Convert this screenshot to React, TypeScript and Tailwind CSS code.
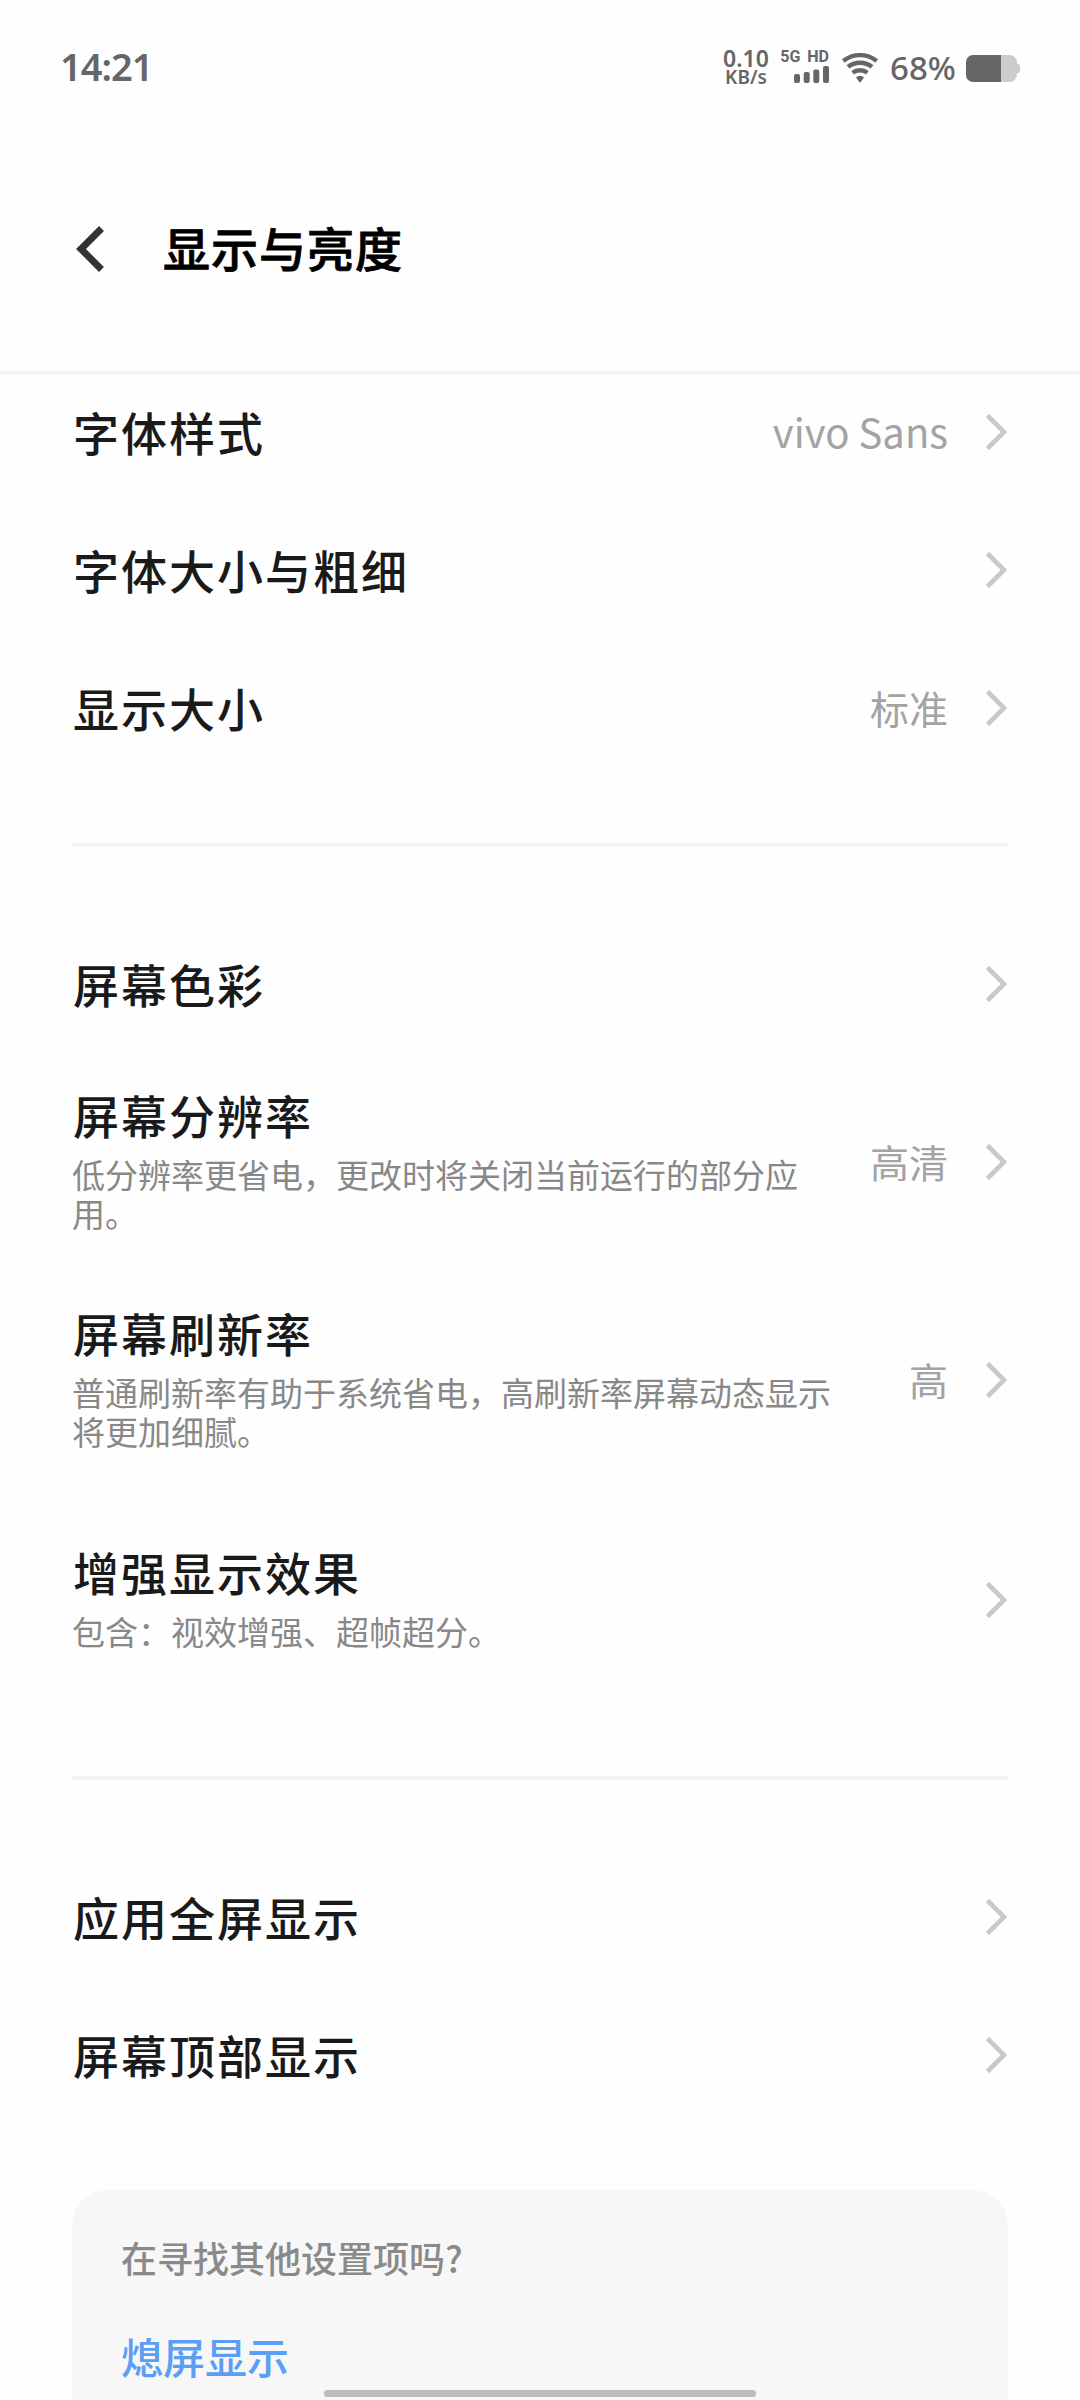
import { clsx } from 'clsx'

interface SettingItem {
  title: string
  description?: string
  value?: string
  className?: string
}

const fontGroup: SettingItem[] = [
  { title: '字体样式', value: 'vivo Sans', className: 'h-[126px] pb-3' },
  { title: '字体大小与粗细' },
  { title: '显示大小', value: '标准' }
]

const screenGroup: SettingItem[] = [
  { title: '屏幕色彩' },
  {
    title: '屏幕分辨率',
    description: '低分辨率更省电，更改时将关闭当前运行的部分应用。',
    value: '高清',
    className: 'h-[218px]'
  },
  {
    title: '屏幕刷新率',
    description: '普通刷新率有助于系统省电，高刷新率屏幕动态显示将更加细腻。',
    value: '高',
    className: 'h-[218px]'
  },
  { title: '增强显示效果', description: '包含：视效增强、超帧超分。', className: 'h-[221px]' }
]

const displayGroup: SettingItem[] = [{ title: '应用全屏显示' }, { title: '屏幕顶部显示' }]

function ChevronIcon() {
  return (
    <svg width="22" height="38" viewBox="0 0 22 38" fill="none" className="shrink-0">
      <path d="M2.5 2.5 19 19 2.5 35.5" stroke="#c9c9c9" strokeWidth="4.6" />
    </svg>
  )
}

function BackIcon() {
  return (
    <svg width="30" height="48" viewBox="0 0 30 48" fill="none" className="shrink-0">
      <path d="M27.5 3.5 7 24l20.5 20.5" stroke="#333" strokeWidth="7" />
    </svg>
  )
}

function SignalIcon() {
  return (
    <svg width="36" height="17" viewBox="0 0 36 17" fill="#666">
      <rect x="0" y="8" width="6" height="9" rx="2" />
      <rect x="9.7" y="6" width="6" height="11" rx="2" />
      <rect x="19.3" y="3.5" width="6" height="13.5" rx="2" />
      <rect x="29" y="0" width="6" height="17" rx="2" />
    </svg>
  )
}

function WifiIcon() {
  return (
    <svg width="36" height="30" viewBox="0 0 36 30" fill="none" stroke="#666" strokeWidth="4.4">
      <path d="M1.3 8a26.8 26.8 0 0 1 33.4 0" />
      <path d="M6 13.9a19.3 19.3 0 0 1 24 0" />
      <path d="M10.6 19.8a11.8 11.8 0 0 1 14.8 0" />
      <path d="M14 24.3a6.5 6.5 0 0 1 8 0l-3 4.5a1.2 1.2 0 0 1-2 0z" fill="#666" stroke="none" />
    </svg>
  )
}

function BatteryIcon() {
  return (
    <svg width="54" height="28" viewBox="0 0 54 28">
      <path d="M34 0h9.5a7.5 7.5 0 0 1 7.5 7.5V9h.5a2.5 2.5 0 0 1 2.5 2.5v4a2.5 2.5 0 0 1-2.5 2.5H51v1.5a7.5 7.5 0 0 1-7.5 7.5H34z" fill="#ccc" />
      <path d="M7 0h28v27H7a7 7 0 0 1-7-7V7a7 7 0 0 1 7-7z" fill="#666" />
    </svg>
  )
}

function StatusBar() {
  return (
    <div className="flex h-[134px] shrink-0 items-center justify-between pr-[60px] pl-[60px] text-[#666]">
      <span className="pb-0.5 font-['Noto_Sans',sans-serif] text-[38px] leading-none font-semibold tracking-[-1px]">14:21</span>
      <div className="flex items-center">
        <div className="flex w-[46px] flex-col items-center font-['Noto_Sans',sans-serif] leading-none font-semibold">
          <span className="text-[23px] leading-[20px]">0.10</span>
          <span className="text-[19px] leading-[19px]">KB/s</span>
        </div>
        <div className="ml-[14px] flex w-[47px] flex-col items-end pb-0.5">
          <div className="flex gap-[7px] pr-px font-['Roboto',sans-serif] text-[16px] leading-[15px] font-bold">
            <span>5G</span>
            <span>HD</span>
          </div>
          <div className="mt-[2px]">
            <SignalIcon />
          </div>
        </div>
        <div className="ml-3 pt-0.5">
          <WifiIcon />
        </div>
        <span className="ml-[12px] w-[76px] font-['Noto_Sans',sans-serif] text-[33px] leading-none font-medium">68%</span>
        <div className="pt-[3px]">
          <BatteryIcon />
        </div>
      </div>
    </div>
  )
}

function SettingRow({ title, description, value, className }: SettingItem) {
  return (
    <div className={clsx('flex items-center', className ?? 'h-[138px]')}>
      <div className={clsx('min-w-0 flex-1', description ? 'pb-[7px]' : 'pb-[3px]')}>
        <h2 className="pl-px text-[46px] leading-[60px] font-medium tracking-[2px] text-[#1a1a1a]">{title}</h2>
        {description && (
          <p className="mt-[11px] text-[33px] leading-[39px] text-[#888]">{description}</p>
        )}
      </div>
      {value && (
        <span
          className={clsx(
            'ml-16 pb-0.5 whitespace-nowrap text-[#a3a3a3]',
            value === 'vivo Sans' ? 'text-[40px]' : 'text-[39px]'
          )}
        >
          {value}
        </span>
      )}
      <div className="mr-px ml-[37px]">
        <ChevronIcon />
      </div>
    </div>
  )
}

function SettingGroup({ items }: { items: SettingItem[] }) {
  return (
    <section>
      {items.map(item => (
        <SettingRow key={item.title} {...item} />
      ))}
    </section>
  )
}

function Divider() {
  return <div className="mt-[66px] mb-[68px] h-1 bg-[#f4f4f4]" />
}

export default function App() {
  return (
    <div
      lang="zh-CN"
      className="relative flex h-[2400px] w-[1080px] flex-col overflow-hidden bg-[#fefefe] font-['Noto_Sans_CJK_SC',sans-serif]"
    >
      <StatusBar />

      {/* Header */}
      <header className="flex h-[241px] shrink-0 items-center border-b-4 border-[#f4f4f4] pb-[7px] pl-[74px]">
        <BackIcon />
        <h1 className="ml-[59px] pb-[5px] text-[47px] leading-[60px] font-medium tracking-[1px] text-black [-webkit-text-stroke:0.8px_#000]">
          显示与亮度
        </h1>
      </header>

      <main className="shrink-0 px-[72px]">
        <SettingGroup items={fontGroup} />
        <Divider />
        <SettingGroup items={screenGroup} />
        <Divider />
        <SettingGroup items={displayGroup} />

        {/* Related settings */}
        <div className="mt-[66px] h-[240px] rounded-[36px] bg-[#f7f7f7] px-[49px] pt-[45px]">
          <p className="text-[36px] leading-[44px] font-medium text-[#8a8a8a]">在寻找其他设置项吗?</p>
          <a className="mt-[51px] block text-[42px] leading-[52px] font-medium text-[#5c9df5]">熄屏显示</a>
        </div>
      </main>

      {/* Gesture bar */}
      <div className="absolute bottom-[3px] left-[324px] h-[7px] w-[432px] rounded-full bg-[#bcbcbc]" />
    </div>
  )
}
